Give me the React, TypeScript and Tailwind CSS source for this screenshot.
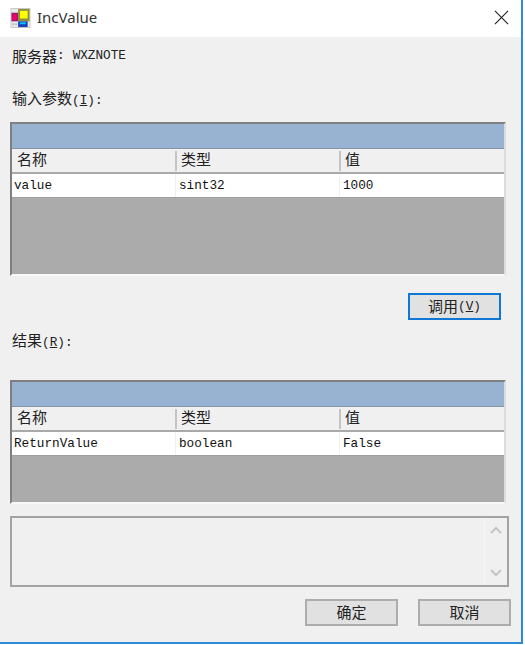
import React from "react";

const cjk = "font-['Noto_Sans_CJK_SC',sans-serif]";
const mono = "font-['Liberation_Mono','Noto_Sans_CJK_SC',monospace]";

function AppIcon() {
  return (
    <svg width="21" height="20" viewBox="0 0 21 21" className="shrink-0">
      <rect x="0" y="0" width="21" height="21" fill="#c9c9c9" />
      <rect x="1" y="1" width="19" height="19" fill="#e9e9e9" />
      <rect x="1" y="5" width="7" height="9" fill="#7d1f6e" />
      <rect x="2" y="6" width="5" height="7" fill="#f0006a" />
      <rect x="8" y="1" width="12" height="13" fill="#8f8f3c" />
      <rect x="10" y="3" width="8" height="8" fill="#ffff00" />
      <rect x="8" y="14" width="10" height="6" fill="#1c3fc0" />
      <rect x="10" y="15" width="6" height="2" fill="#00c8f0" />
      <rect x="2" y="16" width="2" height="2" fill="#bdbdbd" />
      <rect x="5" y="16" width="2" height="2" fill="#bdbdbd" />
    </svg>
  );
}

function Hotkey({ k, tail }: { k: string; tail: string }) {
  return (
    <span className={`text-[12.7px] ${mono}`}>
      (<span className="underline">{k}</span>){tail}
    </span>
  );
}

function ParamTable({
  name,
  type,
  value,
  gray,
}: {
  name: string;
  type: string;
  value: string;
  gray: string;
}) {
  return (
    <div className="border-2 border-t-[#7f7f7f] border-l-[#7f7f7f] border-r-[#dcdcdc] border-b-[#f8f8f8] w-[496px] mr-auto">
      <div className="h-[25px] bg-[#98b3d1] border-b border-[#8493a6]" />
      <div className="flex h-[25px] bg-[#f0f0f0] border-b-2 border-[#a9a9a9] text-[15px] text-[#222] items-center">
        <div className={`w-[163px] pl-[5px] h-[20px] leading-[15px] ${cjk}`}>名称</div>
        <div className={`w-[164px] pl-[4px] border-l-2 border-[#c4c4c4] h-[20px] leading-[15px] ${cjk}`}>类型</div>
        <div className={`flex-1 pl-[4px] border-l-2 border-[#c4c4c4] h-[20px] leading-[15px] ${cjk}`}>值</div>
      </div>
      <div className={`flex h-[23px] bg-white text-[12.7px] text-[#111] items-center ${mono}`}>
        <div className="w-[163px] pl-[2px]">{name}</div>
        <div className="w-[164px] pl-[3px] border-l border-[#f0f0f0] h-full leading-[23px]">{type}</div>
        <div className="flex-1 pl-[3px] border-l border-[#f0f0f0] h-full leading-[23px]">{value}</div>
      </div>
      <div className={`bg-[#ababab] border-t border-[#a0a0a0] ${gray}`} />
    </div>
  );
}

function DlgButton({ label, focused }: { label: React.ReactNode; focused?: boolean }) {
  return (
    <button
      className={`h-[27px] w-[93px] bg-[#e1e1e1] text-[15px] text-[#222] flex items-center justify-center ${cjk} ${
        focused ? "border-2 border-[#0f78d4]" : "border-2 border-[#adadad]"
      }`}
    >
      {label}
    </button>
  );
}

export default function App() {
  return (
    <div className="w-[525px] h-[645px] bg-white overflow-hidden">
      <div className="w-[523px] h-[644px] border-r-2 border-b-2 border-[#2f8ad8] flex flex-col">
        {/* title bar */}
        <div className="h-[37px] shrink-0 bg-white flex items-center pl-[10px] pr-[12px] pb-[2px]">
          <AppIcon />
          <span className="ml-[6px] text-[15px] text-[#333] font-['Noto_Sans','Liberation_Sans',sans-serif]">IncValue</span>
          <svg width="15" height="15" viewBox="0 0 16 16" className="ml-auto" fill="none" stroke="#222" strokeWidth="1.2">
            <path d="M1 1 L15 15 M15 1 L1 15" />
          </svg>
        </div>
        {/* body */}
        <div className="flex-1 bg-[#f0f0f0] pl-[10px] pr-[10px] flex flex-col">
          <div className={`mt-[8px] h-[22px] pl-[2px] flex items-center text-[15px] text-[#222] ${cjk}`}>
            服务器
            <span className={`text-[12.7px] ${mono}`}>:</span>
            <span className={`ml-[8px] text-[12.7px] ${mono}`}>WXZNOTE</span>
          </div>
          <div className={`mt-[20px] h-[22px] pl-[2px] text-[15px] leading-[22px] text-[#222] ${cjk}`}>
            输入参数
            <Hotkey k="I" tail=":" />
          </div>
          <div className="mt-[13px]">
            <ParamTable name="value" type="sint32" value="1000" gray="h-[77px]" />
          </div>
          <div className="mt-[17px] flex justify-end pr-[10px]">
            <DlgButton
              focused
              label={
                <>
                  调用
                  <Hotkey k="V" tail="" />
                </>
              }
            />
          </div>
          <div className={`mt-[9px] h-[22px] pl-[2px] text-[15px] leading-[22px] text-[#222] ${cjk}`}>
            结果
            <Hotkey k="R" tail=":" />
          </div>
          <div className="mt-[29px]">
            <ParamTable name="ReturnValue" type="boolean" value="False" gray="h-[47px]" />
          </div>
          {/* output box */}
          <div className="mt-[12px] w-[499px] h-[71px] border-2 border-[#a3a3a3] bg-[#f0f0f0] flex justify-end">
            <div className="w-[23px] border-l border-[#f6f6f6] flex flex-col items-center justify-between py-[8px] text-[#c4c4c4]">
              <svg width="12" height="8" viewBox="0 0 12 8" fill="none" stroke="currentColor" strokeWidth="2">
                <path d="M1 7 L6 2 L11 7" />
              </svg>
              <svg width="12" height="8" viewBox="0 0 12 8" fill="none" stroke="currentColor" strokeWidth="2">
                <path d="M1 1 L6 6 L11 1" />
              </svg>
            </div>
          </div>
          <div className="mt-[12px] flex justify-end gap-[20px]">
            <DlgButton label="确定" />
            <DlgButton label="取消" />
          </div>
        </div>
      </div>
    </div>
  );
}
